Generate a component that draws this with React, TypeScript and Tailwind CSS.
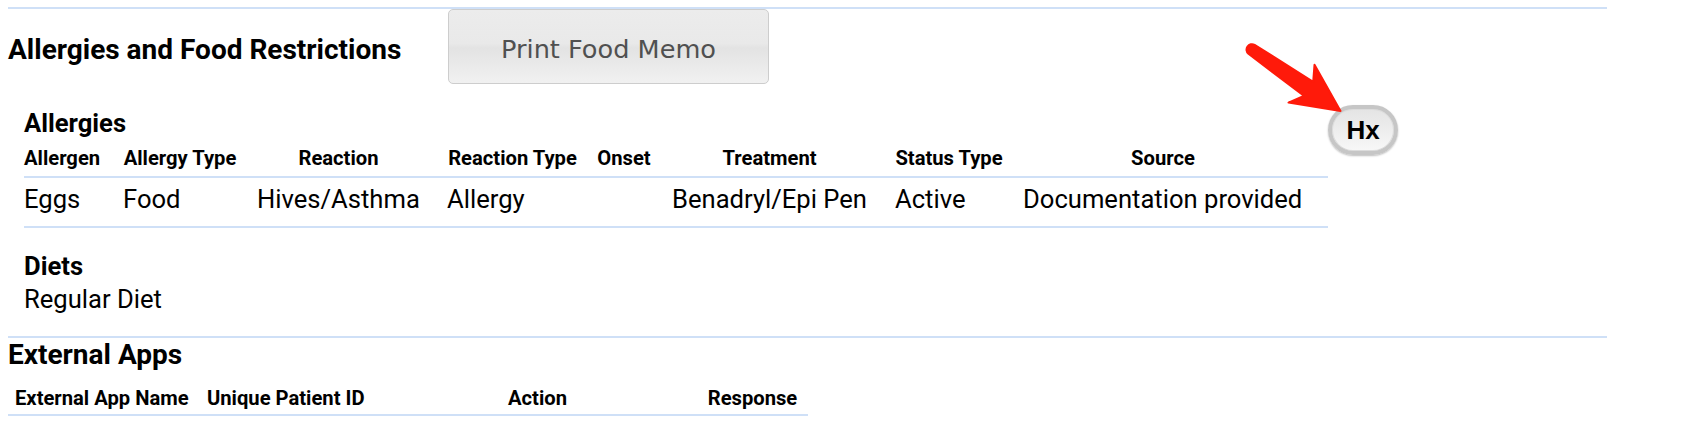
import React from 'react'

interface Column {
  label: string
  width: string
  pad: string
}

const allergyColumns: Column[] = [
  { label: 'Allergen', width: 'w-[99px]', pad: 'pr-[23px]' },
  { label: 'Allergy Type', width: 'w-[134px]', pad: 'pr-[20px]' },
  { label: 'Reaction', width: 'w-[190px]', pad: 'pr-[27px]' },
  { label: 'Reaction Type', width: 'w-[150px]', pad: 'pr-[19px]' },
  { label: 'Onset', width: 'w-[75px]', pad: 'pr-[21px]' },
  { label: 'Treatment', width: 'w-[223px]', pad: 'pr-[28px]' },
  { label: 'Status Type', width: 'w-[128px]', pad: 'pr-[20px]' },
  { label: 'Source', width: 'w-[305px]', pad: 'pr-[25px]' }
]

const allergyRows = [
  ['Eggs', 'Food', 'Hives/Asthma', 'Allergy', '', 'Benadryl/Epi Pen', 'Active', 'Documentation provided']
]

const Rule: React.FC = () => <div className="w-[1599px] h-[2px] bg-[#cfe0f7]" />

const Arrow: React.FC = () => (
  <svg
    className="absolute left-[1230px] top-[40px] w-[130px] h-[90px] pointer-events-none"
    viewBox="1230 40 130 90"
  >
    <path
      d="M1254.6 44.8 L1313.2 81.8 L1314.5 64.8 L1340.5 111 L1288.5 102.6 L1303.8 95.8 L1248.4 53.8 A5.5 5.5 0 0 1 1254.6 44.8 Z"
      fill="#ff1a0a"
      stroke="#ff1a0a"
      strokeWidth="2"
      strokeLinejoin="round"
    />
  </svg>
)

export default function App() {
  return (
    <div className="relative w-[1690px] h-[424px] overflow-hidden bg-white text-black font-['Roboto',sans-serif]">
      <div className="pl-[8px] pt-[7px]">
        <Rule />

        <div className="flex h-[75px]">
          <h2 className="w-[440px] pt-[24px] text-[28px] leading-[34px] font-bold">
            Allergies and Food Restrictions
          </h2>
          <button className="w-[321px] h-[75px] pt-[6px] flex items-center justify-center rounded-[5px] border border-[#cdcdcd] bg-[linear-gradient(to_bottom,#ececec_0%,#e9e9e9_46%,#e3e3e3_52%,#f1f1f1_100%)] text-[#505050] text-[25.6px] font-['DejaVu_Sans',sans-serif]">
            Print Food Memo
          </button>
        </div>

        <div className="flex">
          <div className="ml-[16px] w-[1304px]">
            <h3 className="mt-[24px] text-[25.6px] leading-[30px] font-bold">Allergies</h3>
            <table className="table-fixed w-[1304px]">
              <thead>
                <tr className="border-b-2 border-[#cfe0f7]">
                  {allergyColumns.map((col) => (
                    <th
                      key={col.label}
                      className={`${col.width} ${col.pad} pt-[8px] pb-[6px] text-[20.2px] leading-[24px] font-bold text-center whitespace-nowrap`}
                    >
                      {col.label}
                    </th>
                  ))}
                </tr>
              </thead>
              <tbody>
                {allergyRows.map((row, i) => (
                  <tr key={i} className="border-b-2 border-[#cfe0f7]">
                    {row.map((cell, j) => (
                      <td
                        key={j}
                        className="pt-[6px] pb-[12px] text-[25.6px] leading-[30px] text-left whitespace-nowrap"
                      >
                        {cell}
                      </td>
                    ))}
                  </tr>
                ))}
              </tbody>
            </table>

            <h3 className="mt-[23px] text-[25.6px] leading-[30px] font-bold">Diets</h3>
            <p className="mt-[3px] text-[25.6px] leading-[30px]">Regular Diet</p>
          </div>

          <button className="ml-0 mt-[21px] w-[70px] h-[50px] flex items-center justify-center rounded-full border-[4px] border-[#c6c6c6] shadow-[inset_0_0_0_1px_#dcdcdc,0_1px_2px_#bdbdbd] bg-[linear-gradient(to_bottom,#e4e4e4_0%,#eeeeee_55%,#f8f8f8_100%)] text-[26px] font-bold font-['Liberation_Sans',Arial,sans-serif]">
            Hx
          </button>
        </div>

        <div className="mt-[22px]">
          <Rule />
        </div>

        <h2 className="text-[28px] leading-[34px] font-bold">External Apps</h2>
        <table className="table-fixed w-[800px]">
          <thead>
            <tr className="border-b-2 border-[#cfe0f7]">
              <th className="w-[191px] pl-[7px] pt-[14px] pb-[4px] text-[20.2px] leading-[24px] font-bold text-left whitespace-nowrap">
                External App Name
              </th>
              <th className="w-[179px] pl-[8px] pt-[14px] pb-[4px] text-[20.2px] leading-[24px] font-bold text-left whitespace-nowrap">
                Unique Patient ID
              </th>
              <th className="w-[319px] pt-[14px] pb-[4px] text-[20.2px] leading-[24px] font-bold text-center">
                Action
              </th>
              <th className="w-[111px] pt-[14px] pb-[4px] text-[20.2px] leading-[24px] font-bold text-center">
                Response
              </th>
            </tr>
          </thead>
        </table>
      </div>

      <Arrow />
    </div>
  )
}
